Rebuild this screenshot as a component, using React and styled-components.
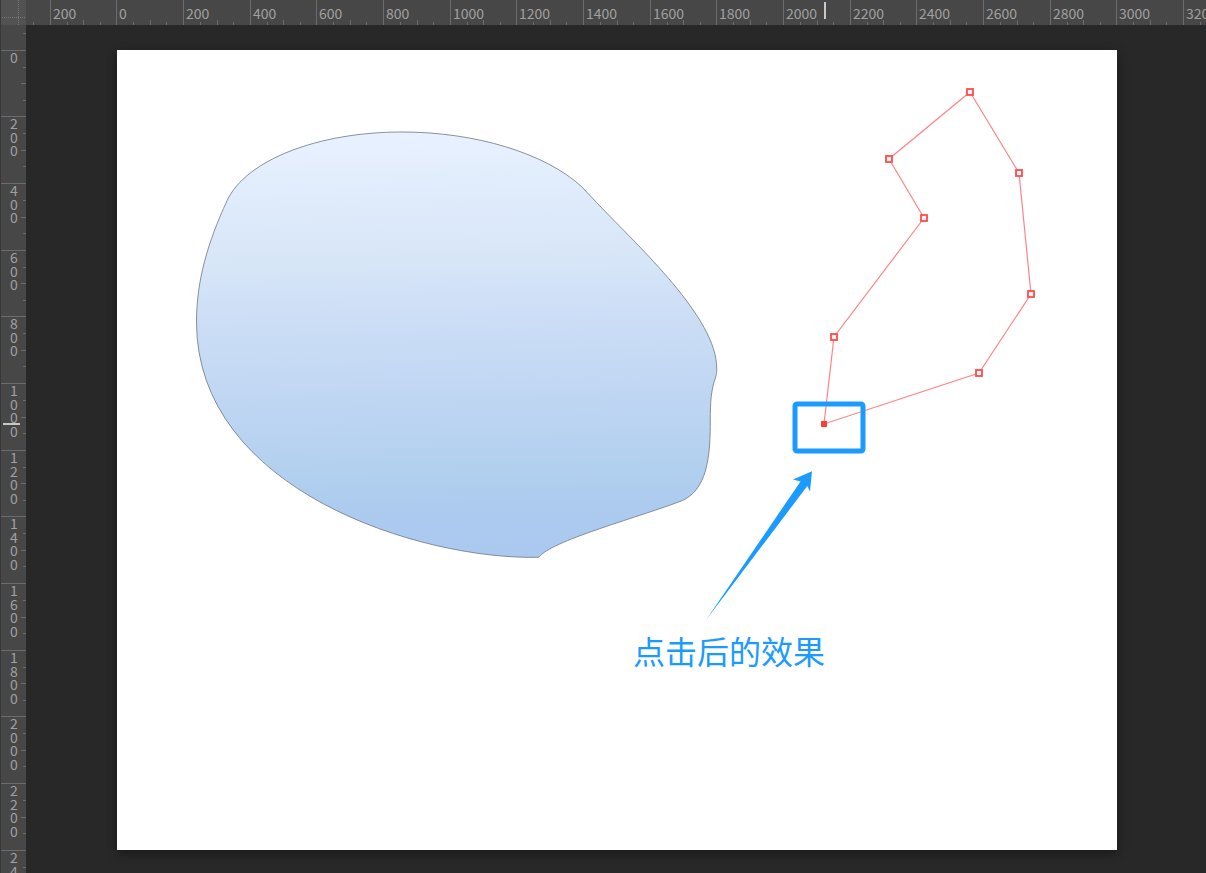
import React from 'react';
import styled, { createGlobalStyle } from 'styled-components';

const GlobalStyle = createGlobalStyle`
  body {
    margin: 0;
    background: #282828;
    font-family: "Noto Sans CJK SC", "Noto Sans", sans-serif;
  }
`

const Editor = styled.div`
  display: grid;
  grid-template-columns: 26px minmax(0, 1fr);
  grid-template-rows: 25px minmax(0, 1fr);
  height: 100vh;
  overflow: hidden;
`
const Corner = styled.div`
  background: #525252;
  border-left: 1px solid #383838;
  box-sizing: border-box;

  svg {
    display: block;
  }
`
const Ruler = styled.div`
  position: relative;
  overflow: hidden;
  background: #474747;
  color: #a0a0a0;
  font-size: 14px;
  box-sizing: border-box;
  border-left: ${props => props.$vertical ? '1px solid #383838' : 'none'};
`
const Track = styled.div`
  display: flex;
  flex-direction: ${props => props.$vertical ? 'column' : 'row'};
  margin: ${props => props.$vertical ? '-42px 0 0 0' : '0 0 0 -43px'};
`
const ColumnCell = styled.div`
  flex: none;
  display: grid;
  grid-template-rows: 20px 5px;
  width: ${props => props.$size}px;
  height: 25px;
  box-sizing: border-box;
  border-left: 1px solid #6c6c6c;
`
const RowCell = styled.div`
  flex: none;
  display: grid;
  grid-template-columns: 20px 5px;
  height: ${props => props.$size}px;
  box-sizing: border-box;
  border-top: 1px solid #6c6c6c;
`
const Label = styled.span`
  padding: 3px 0 0 2px;
  line-height: 20px;
`
const Digits = styled.span`
  display: grid;
  grid-auto-rows: 14px 13px;
  align-content: start;
  justify-items: center;
  padding: 0 0 0 6px;
  line-height: 13px;
`
const ColumnTicks = styled.div`
  display: flex;
  align-items: flex-end;
  justify-content: space-evenly;
`
const RowTicks = styled.div`
  display: flex;
  flex-direction: column;
  align-items: flex-end;
  justify-content: space-evenly;
`
const Tick = styled.i`
  background: #6c6c6c;
  width: ${props => props.$vertical ? props.$length : 1}px;
  height: ${props => props.$vertical ? 1 : props.$length}px;
`
const PointerMark = styled.div`
  position: absolute;
  background: #c8c8c8;
  left: ${props => props.$vertical ? 2 : 798}px;
  top: ${props => props.$vertical ? 398 : 2}px;
  width: ${props => props.$vertical ? 17 : 2}px;
  height: ${props => props.$vertical ? 2 : 17}px;
`
const Workspace = styled.main`
  background: #282828;
  padding: 25px 89px 23px 91px;
  overflow: hidden;
`
const Artboard = styled.div`
  position: relative;
  aspect-ratio: 5 / 4;
  background: #fff;
  box-shadow: 0 3px 10px rgba(0,0,0,0.4);

  svg {
    display: block;
    width: 100%;
    height: 100%;
  }
`
const Caption = styled.div`
  position: absolute;
  left: 51.6%;
  top: 72.25%;
  color: #1c9bff;
  font-size: 32px;
  line-height: 44px;
  white-space: nowrap;
`

const UNIT = 200;
const sizes = [67, 66, 67];

const marks = (start, count) => Array.from({ length: count }, (_, i) => ({
  value: Math.abs(start + i * UNIT),
  size: sizes[i % 3],
}));

const anchors = [
  [853, 42], [902, 123], [914, 244], [862, 323],
  [707, 374], [717, 287], [807, 168], [772, 109],
];
const SELECTED = 4;

const HorizontalRuler = () => (
  <Ruler>
    <Track>
      {marks(-400, 19).map((mark, i) => (
        <ColumnCell key={i} $size={mark.size}>
          <Label>{i > 0 && mark.value}</Label>
          <ColumnTicks>
            <Tick $length={3} />
            <Tick $length={5} />
            <Tick $length={3} />
          </ColumnTicks>
        </ColumnCell>
      ))}
    </Track>
    <PointerMark />
  </Ruler>
);

const VerticalRuler = () => (
  <Ruler $vertical>
    <Track $vertical>
      {marks(-200, 14).map((mark, i) => (
        <RowCell key={i} $size={mark.size}>
          <Digits>
            {i > 0 && String(mark.value).split('').map((digit, n) => (
              <span key={n}>{digit}</span>
            ))}
          </Digits>
          <RowTicks>
            <Tick $vertical $length={3} />
            <Tick $vertical $length={5} />
            <Tick $vertical $length={3} />
          </RowTicks>
        </RowCell>
      ))}
    </Track>
    <PointerMark $vertical />
  </Ruler>
);

const Drawing = () => (
  <svg viewBox="0 0 1000 800" aria-hidden="true">
    <defs>
      <linearGradient id="sky" x1="0.49" y1="0" x2="0.51" y2="1">
        <stop offset="0" stopColor="#e8f1ff" />
        <stop offset="0.32" stopColor="#d6e5f7" />
        <stop offset="0.37" stopColor="#d1e1f7" />
        <stop offset="0.6" stopColor="#c1d7f3" />
        <stop offset="0.82" stopColor="#b0cfee" />
        <stop offset="0.88" stopColor="#accbef" />
        <stop offset="1" stopColor="#abc9ef" />
      </linearGradient>
    </defs>
    <path
      d="M110 150.7 C129 110 201 82 285 82 C358 82 428 103 464.7 136.7
        L479.7 152.7 C523 198 599.7 268 599.7 318 C599.7 323 599.5 325 598.7 327
        C594 340 593.3 352 593.3 370 C593.3 405 591 441 563 451.5
        C516 469 434 491 421.7 507.3 C303 510 79.5 440 79.5 272
        C79.5 230 91 192 110 150.7 Z"
      fill="url(#sky)" stroke="#6f7680" strokeWidth="0.8"
    />
    <polygon
      points={anchors.map(point => point.join(',')).join(' ')}
      fill="none" stroke="#ff8585" strokeWidth="1.2"
    />
    {anchors.map(([x, y], i) => (
      i === SELECTED
        ? <rect key={i} x={x - 3} y={y - 3} width="6" height="6" fill="#ff3b3b" />
        : <rect key={i} x={x - 3} y={y - 3} width="6" height="6" fill="#f4f4f4" stroke="#ff4c4c" strokeWidth="1.8" />
    ))}
    <rect x="678" y="354" width="68" height="47" rx="2" fill="none" stroke="#1c9bff" strokeWidth="5" />
    <path d="M695 421.3 L676 429.5 L683.5 431.5 L589 570 L690.3 436 L693 441.5 Z" fill="#1c9bff" />
  </svg>
);

const App = () => (
  <>
    <GlobalStyle />
    <Editor>
      <Corner>
        <svg width="25" height="25" aria-hidden="true">
          <path d="M17.5 0 V25 M1 17.5 H25" stroke="#777" strokeDasharray="1 1" />
        </svg>
      </Corner>
      <HorizontalRuler />
      <VerticalRuler />
      <Workspace>
        <Artboard>
          <Drawing />
          <Caption>点击后的效果</Caption>
        </Artboard>
      </Workspace>
    </Editor>
  </>
);

export default App;
